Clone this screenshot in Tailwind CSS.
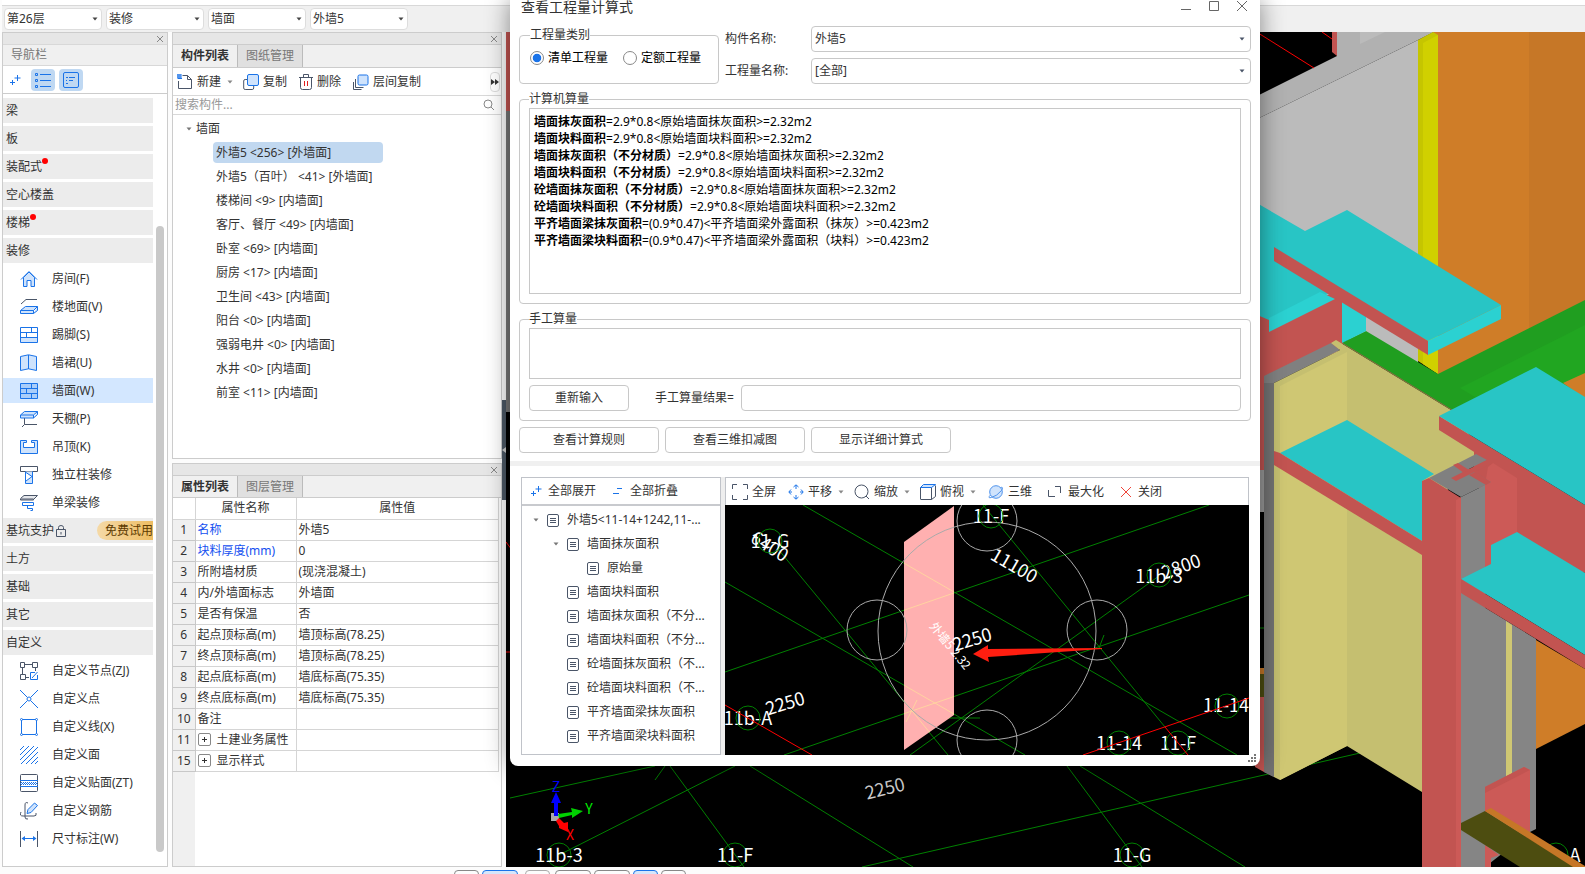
<!DOCTYPE html>
<html lang="zh-CN">
<head>
  <meta charset="UTF-8">
  <meta name="viewport" content="width=device-width, initial-scale=1.0">
  <title>查看工程量计算式</title>
  <script src="https://cdn.jsdelivr.net/npm/@tailwindcss/browser@4"></script>
</head>
<body class="h-screen overflow-hidden bg-[#fcfcfc] text-xs text-[#333] font-['Noto_Sans','Noto_Sans_CJK_SC',sans-serif]">

  <!-- icon sprite -->
  <svg class="hidden" xmlns="http://www.w3.org/2000/svg">
    <symbol id="i-close" viewBox="0 0 8 8"><path d="M1 1l6 6M7 1L1 7" stroke="currentColor" fill="none"/></symbol>
    <symbol id="i-caret" viewBox="0 0 6 4"><path d="M0.500 0.500h5L3 3.500z" fill="currentColor"/></symbol>
    <symbol id="i-plus" viewBox="0 0 12 12"><path d="M8.500 1v6M5.500 4h6M3.500 6v5M1 8.500h5" stroke="#1a73e8" fill="none"/></symbol>
    <symbol id="i-minus" viewBox="0 0 12 12"><path d="M5 3.500h5M1 8.500h6" stroke="#1a73e8" fill="none"/></symbol>
    <symbol id="i-list" viewBox="0 0 16 16"><g stroke="#1a73e8" fill="none"><path d="M5 2.500h11M5 8.500h11M5 14.500h11"/><path d="M.5 1.500h2v2h-2zM.5 7.500h2v2h-2zM.5 13.500h2v2h-2z"/></g></symbol>
    <symbol id="i-card" viewBox="0 0 16 16"><g stroke="#1a73e8" fill="none"><rect x=".5" y=".5" width="15" height="15" rx="1.500"/><path d="M3 5.500h2M6 5.500h6M3 8.500h1M6 8.500h4M3 11.500h2"/></g></symbol>
    <symbol id="i-doc" viewBox="0 0 12 13"><g stroke="#4a5568" fill="none"><rect x=".5" y=".5" width="11" height="12" rx="1.500"/><path d="M3 4.500h6M3 6.500h6M3 8.500h6"/></g></symbol>

    <symbol id="i-new" viewBox="0 0 16 16"><g fill="none"><path d="M5.500 1.500h5l4 4v9h-13V7M10.500 1.500v4h4" stroke="#4a5568"/><path d="M0 1h5M0 3h5M1 4.500h4M1 0v5M3 0v5" stroke="#1a73e8"/></g></symbol>
    <symbol id="i-copy" viewBox="0 0 16 16"><rect x=".7" y="5.500" width="10" height="10" rx="1.500" fill="#fff" stroke="#4a5568"/><rect x="4.500" y=".5" width="11" height="11" rx="1.500" fill="#cfe3fc" stroke="#1a73e8"/></symbol>
    <symbol id="i-trash" viewBox="0 0 14 16"><g fill="none" stroke="#4a5568"><path d="M0 3.500h14M4.500 3V.5h5V3M1.500 4v9.500q0 2 2 2h7q2 0 2-2V4"/><path d="M5.500 7v5M8.500 7v5" stroke="#e02020"/></g></symbol>
    <symbol id="i-floor" viewBox="0 0 16 16"><path d="M2.500 5v8.500h8M.5 8v7.500h8" stroke="#4a5568" fill="none"/><rect x="5" y="1" width="10" height="10" rx="1.500" fill="#cfe3fc" stroke="#1a73e8"/></symbol>
    <symbol id="i-search" viewBox="0 0 12 12"><g fill="none" stroke="currentColor"><circle cx="5" cy="5" r="4"/><path d="M8 8l3 3"/></g></symbol>

    <symbol id="n-room" viewBox="0 0 18 18"><path d="M3.500 7.500v9h3.500v-6h4v6h3.500v-9L9 2z" fill="#cfe3fc" stroke="#1a73e8"/><path d="M1 9.500L9 1.500l8 8" fill="none" stroke="#1a73e8"/></symbol>
    <symbol id="n-ground" viewBox="0 0 18 18"><path d="M1 6l5-4.500h11" fill="none" stroke="#4a5568"/><path d="M.5 12.500h13v3H.5zM.5 12.500l5-4h12l-4 4M17.500 8.500v4l-4 3" fill="#cfe3fc" stroke="#1a73e8"/></symbol>
    <symbol id="n-skirt" viewBox="0 0 18 18"><path d="M.5 11.500h17v5H.5z" fill="#cfe3fc"/><path d="M.5 1.500h17v15H.5zM.5 6.500h17M.5 11.500h17M11.500 1.500v5M6.500 6.500v5" fill="none" stroke="#1a73e8"/></symbol>
    <symbol id="n-dado" viewBox="0 0 18 18"><path d="M.5 2.500L8.500.8l8 1.700v14l-8-1.700-8 1.700z" fill="#cfe3fc" stroke="#1a73e8"/><path d="M8.500 1v14" stroke="#1a73e8"/></symbol>
    <symbol id="n-wall" viewBox="0 0 18 18"><path d="M.5 1.500h17v15H.5z" fill="#a9cdfa"/><path d="M.5 1.500h17v15H.5zM.5 6.500h17M.5 11.500h17M11.500 1.500v5M6.500 6.500v5M11.500 11.500v5" fill="none" stroke="#1a73e8"/></symbol>
    <symbol id="n-ceil" viewBox="0 0 18 18"><path d="M4.500 8v6.500H17M4.500 14.500L2 17" fill="none" stroke="#4a5568"/><path d="M.5 5h13v3H.5zM.5 5l4-3.500h13l-4 3.500M17.500 1.500v3L13.500 8" fill="#cfe3fc" stroke="#1a73e8"/></symbol>
    <symbol id="n-susp" viewBox="0 0 18 18"><path d="M.5 2.500h6v2h-3v5h11v-5h-3v-2h6v13H.5z" fill="#cfe3fc" stroke="#1a73e8"/></symbol>
    <symbol id="n-col" viewBox="0 0 18 18"><path d="M.5.5h17v5H.5z" fill="none" stroke="#4a5568"/><path d="M5.500 5.500v12h7v-12M6 6.500l6 4-6 4.500" fill="#cfe3fc" stroke="#1a73e8"/></symbol>
    <symbol id="n-beam" viewBox="0 0 18 18"><path d="M.5 5h13v1H.5zM.5 4.500L4 1.500h13.500L14 5" fill="#e5e7eb" stroke="#4a5568"/><path d="M2.500 8.500h11v3h-11zM7.500 11.500v3h5v2h-2" fill="none" stroke="#1a73e8"/></symbol>
    <symbol id="n-node" viewBox="0 0 18 18"><g fill="none" stroke="#4a5568"><path d="M.5.500h4v5h-4zM12.500.500h5v5h-5zM.5 12.500h5v5h-5zM5 2.500h7M2.500 6v6M15.500 6v3M6 15.500h3"/><path d="M15 10.500h-4.500v7h7V13M12 16l5.500-6" stroke="#1a73e8"/></g></symbol>
    <symbol id="n-point" viewBox="0 0 18 18"><path d="M0 0l7.500 7.500M18 0l-7.500 7.500M0 18l7.500-7.500M18 18l-7.500-7.500" stroke="#1a73e8"/><circle cx="9" cy="9" r="2" fill="#fff" stroke="#1a73e8"/></symbol>
    <symbol id="n-line" viewBox="0 0 18 18"><g fill="#fff" stroke="#1a73e8"><path d="M1.500 1.500h15v15h-15z"/><circle cx="1.500" cy="1.500" r="1"/><circle cx="16.500" cy="1.500" r="1"/><circle cx="1.500" cy="16.500" r="1"/><circle cx="16.500" cy="16.500" r="1"/></g></symbol>
    <symbol id="n-face" viewBox="0 0 18 18"><path d="M0 4l4-4M0 9l9-9M0 14L14 0M1 18L18 1M6 18L18 6M11 18l7-7M15 18l3-3" stroke="#1a73e8"/></symbol>
    <symbol id="n-paste" viewBox="0 0 18 18"><rect x=".5" y=".5" width="17" height="17" rx="1" fill="none" stroke="#4a5568"/><path d="M0 6.500h18M0 12.500h18" stroke="#1a73e8"/><path d="M1 8.500h17M0 9.500h17M1 10.500h17" stroke="#1a73e8" stroke-dasharray="1 1"/></symbol>
    <symbol id="n-rebar" viewBox="0 0 18 18"><path d="M8 1q-3-1.500-3 2v12q0 2.500 3 2M1 10q-2 4 2 4h11q3 0 2-3" fill="none" stroke="#4a5568"/><path d="M7 11.500l1-4L14.500 1l3 2.500-6.500 7z" fill="#cfe3fc" stroke="#1a73e8"/></symbol>
    <symbol id="n-dim" viewBox="0 0 18 18"><path d="M.5 1v16M17.500 1v16" stroke="#4a5568"/><path d="M3 8.500h12" stroke="#1a73e8"/><path d="M1.500 8.500L5 6v5zM16.500 8.500L13 6v5z" fill="#1a73e8"/></symbol>

    <symbol id="v-full" viewBox="0 0 16 16"><path d="M.5 5V.5H5M11 .5h4.500V5M15.500 11v4.500H11M5 15.500H.5V11" fill="none" stroke="#4a5568"/></symbol>
    <symbol id="v-pan" viewBox="0 0 16 16"><g fill="none" stroke="#1a73e8"><path d="M5.500 3L8 .8 10.500 3M5.500 13L8 15.200 10.500 13M3 5.500L.8 8 3 10.500M13 5.500L15.200 8 13 10.500M8 1v4M8 11v4M1 8h3M12 8h3"/></g></symbol>
    <symbol id="v-zoom" viewBox="0 0 16 16"><g fill="none" stroke="#4a5568"><circle cx="7.500" cy="7.500" r="6.500"/><path d="M12 12l3 3"/></g></symbol>
    <symbol id="v-top" viewBox="0 0 16 16"><path d="M.5 3.500h11v12H1q-.5 0-.5-.5zM11.500 15.500l4-3v-11" fill="none" stroke="#4a5568"/><path d="M.5 3.500l3-3h12l-4 3z" fill="#cfe3fc" stroke="#1a73e8"/></symbol>
    <symbol id="v-orbit" viewBox="0 0 16 16"><circle cx="8" cy="8" r="6.300" fill="#cfe3fc" stroke="#4f93ec"/><path d="M2.500 11q-3.500 3.500 1 2.500Q9 12 13.500 6.500q2.500-4-1-3" fill="none" stroke="#4f93ec"/></symbol>
    <symbol id="v-max" viewBox="0 0 16 16"><path d="M7 2.500h5.500V9M.5 6v6.500H7" fill="none" stroke="#4a5568"/></symbol>
    <symbol id="v-x" viewBox="0 0 16 16"><path d="M3 3l10 10M13 3L3 13" fill="none" stroke="#f04438"/></symbol>
  </svg>

  <div class="flex h-full flex-col pl-0.5">
    <div class="h-[5px] shrink-0 bg-white"></div>

    <!-- floor / category pickers -->
    <header class="flex h-[27px] shrink-0 items-center gap-1 border-t border-[#d8d8d8] bg-[#f0f0f0] pr-2 pl-0.5" id="pickers"></header>

    <main class="flex min-h-0 flex-1">
      <!-- navigation -->
      <nav class="flex w-[166px] shrink-0 flex-col border border-[#ccc] bg-white">
        <div class="flex h-[11px] items-center justify-end bg-[#e6e6e6] pr-[3px] text-[#888]"><button aria-label="关闭"><svg class="size-2"><use href="#i-close"/></svg></button></div>
        <div class="flex h-[22px] items-center border-y border-[#d8d8d8] bg-[#f0f0f0] pl-2 text-[#777]">导航栏</div>
        <div class="flex h-7 shrink-0 items-center gap-1 border-b border-[#ccc]">
          <button class="flex h-[22px] w-6 items-center justify-center" aria-label="展开"><svg class="size-3"><use href="#i-plus"/></svg></button>
          <button class="flex h-[22px] w-6 items-center justify-center rounded-sm bg-[#bfd8f2]" aria-label="列表"><svg class="size-4"><use href="#i-list"/></svg></button>
          <button class="flex h-[22px] w-6 items-center justify-center rounded-sm bg-[#bfd8f2]" aria-label="卡片"><svg class="size-4"><use href="#i-card"/></svg></button>
        </div>
        <div class="flex min-h-0 flex-1 overflow-hidden pt-1">
          <div class="flex w-[150px] flex-col gap-[3px]" id="nav"></div>
          <div class="flex flex-1 justify-center pt-32 pb-[14px]"><div class="h-full w-2 rounded-full bg-[#c9c9c9]"></div></div>
        </div>
      </nav>

      <div class="ml-1 flex w-[330px] shrink-0 flex-col gap-1">
        <!-- component list -->
        <section class="flex h-[427px] shrink-0 flex-col border border-[#ccc] bg-white">
          <div class="flex h-[11px] shrink-0 items-center justify-end bg-[#e6e6e6] pr-[3px] text-[#888]"><button aria-label="关闭"><svg class="size-2"><use href="#i-close"/></svg></button></div>
          <div class="flex h-6 shrink-0 border-y border-[#ccc] bg-[#f0f0f0]">
            <button class="w-16 font-bold">构件列表</button>
            <button class="w-[66px] border-x border-[#bbb] bg-[#e0e0e0] text-[#777]">图纸管理</button>
          </div>
          <div class="flex h-7 shrink-0 items-center border-b border-[#d8d8d8] pl-1">
            <button class="flex items-center gap-1"><svg class="size-4"><use href="#i-new"/></svg>新建</button>
            <svg class="ml-1.5 h-1 w-1.5 text-[#888]"><use href="#i-caret"/></svg>
            <button class="ml-2.5 flex items-center gap-1"><svg class="size-4"><use href="#i-copy"/></svg>复制</button>
            <button class="ml-3 flex items-center gap-1"><svg class="h-4 w-3.5"><use href="#i-trash"/></svg>删除</button>
            <button class="ml-3 flex items-center gap-1"><svg class="size-4"><use href="#i-floor"/></svg>层间复制</button>
            <button class="mr-px ml-auto flex h-5 w-2.5 items-center justify-center rounded-sm border border-[#ddd]" aria-label="更多"><svg class="h-1.5 w-2 shrink-0" viewBox="0 0 8 6"><path d="M0 0l4 3-4 3zM4 0l4 3-4 3z" fill="#333"/></svg></button>
          </div>
          <label class="flex h-[19px] shrink-0 items-center border-b border-[#d8d8d8] pr-1.5 pl-0.5 text-[#888]">
            <input class="min-w-0 flex-1 outline-none placeholder:text-[#999]" placeholder="搜索构件..." aria-label="搜索构件">
            <svg class="size-3"><use href="#i-search"/></svg>
          </label>
          <div class="pt-0.5 pl-[13px]">
            <div class="flex h-[23px] items-center gap-1"><svg class="h-1 w-1.5 text-[#777]"><use href="#i-caret"/></svg>墙面</div>
            <ul id="components"></ul>
          </div>
        </section>

        <!-- properties -->
        <section class="flex min-h-0 flex-1 flex-col border border-[#ccc] bg-white">
          <div class="flex h-[11px] shrink-0 items-center justify-end bg-[#e6e6e6] pr-[3px] text-[#888]"><button aria-label="关闭"><svg class="size-2"><use href="#i-close"/></svg></button></div>
          <div class="flex h-[23px] shrink-0 border-y border-[#ccc] bg-[#f0f0f0]">
            <button class="w-16 font-bold">属性列表</button>
            <button class="w-[66px] border-x border-[#bbb] bg-[#e0e0e0] text-[#777]">图层管理</button>
          </div>
          <table class="mr-0.5 table-fixed border-collapse">
            <thead>
              <tr class="h-[21px]">
                <th class="w-[22px] border-r border-b border-[#d5d5d5]"></th>
                <th class="w-[101px] border-r border-b border-[#d5d5d5] font-normal">属性名称</th>
                <th class="border-r border-b border-[#d5d5d5] font-normal">属性值</th>
              </tr>
            </thead>
            <tbody id="props"></tbody>
          </table>
          <div class="w-[22px] flex-1 bg-[#f0f0f0]"></div>
        </section>
      </div>

      <div class="flex w-1 shrink-0 flex-col pt-[368px]"><div class="flex h-[100px] items-center bg-[#4c5865]"><svg class="h-1.5 w-1" viewBox="0 0 4 6"><path d="M4 0v6L0 3z" fill="#ccc"/></svg></div></div>

      <!-- 3D model -->
      <div class="relative min-w-0 flex-1 overflow-hidden bg-black">
        <svg class="absolute inset-0 h-full w-full font-['Noto_Sans_CJK_SC',sans-serif]" viewBox="506 32 1079 835" preserveAspectRatio="xMinYMin slice">
          <path d="M506 32h6v79h-6z" fill="#c25451"/>
          <path d="M506 111h6v301h-6z" fill="#777"/>
          <g stroke="#008000" fill="none">
            <path d="M510 798L655 766M670 766L744 867M665 766L655 780M735 766L559 855M750 766L913 867M862 867L1360 753M1067 766L1142 867M1080 766L1245 867"/>
            <circle cx="559" cy="855" r="12"/><circle cx="735" cy="855" r="12"/><circle cx="1132" cy="855" r="12"/><circle cx="1556" cy="855" r="12"/>
          </g>
          <path d="M506 542l6 8M506 652h6" stroke="#f00"/>
          <g fill="#fff" font-size="18" text-anchor="middle">
            <text x="559" y="862">11b-3</text><text x="735" y="862">11-F</text><text x="1132" y="862">11-G</text>
            <text transform="rotate(-14 885 789)" x="885" y="795" fill="#ccc">2250</text>
            <text x="1575" y="862">A</text>
          </g>
          <!-- axis gizmo -->
          <path d="M551 813h8v8h-8z" fill="#aaa"/>
          <path d="M554 816v-13h-3l5-11 5 11h-3v13z" fill="#00f"/>
          <path d="M558 814l14-2-1-4 12 3-11 7v-3l-13 3z" fill="#00d000"/>
          <path d="M556 821l3-3 5 5 4-1 0 10-9-4 0-2z" fill="#f00"/>
          <g font-size="14" text-anchor="middle"><text x="556" y="792" fill="#00f">Z</text><text x="589" y="814" fill="#0e0">Y</text><text x="570" y="840" fill="#f00">X</text></g>

          <!-- walls behind -->
          <path d="M1255 97l82-41V32h97l-16 8-163 80z" fill="#b1b1b1"/>
          <path d="M1360 32h25l-25 12z" fill="#bbb"/>
          <path d="M1255 120l163-80v325l-163-60z" fill="#bbb"/>
          <path d="M1332 32h5v24l-5-4z" fill="#c25451"/>
          <path d="M1255 31l59 37M1322 32l10 7" stroke="#f00"/>
          <path d="M1433 32h96v320l-91 24z" fill="#cf7d28"/>
          <path d="M1529 32h56v290l-56 30z" fill="#c67727"/>
          <path d="M1418 40l15-8 5 3v339l-20-13z" fill="#c5c500"/>
          <path d="M1423 43l15-8v339l-15-10z" fill="#d0d000"/>
          <path d="M1341 343l25-12 72 43 147-74v110l-134 0z" fill="#209e20"/>
          <path d="M1460 388l125-63v60l-110 12z" fill="#21a621"/>
          <path d="M1563 383l22-10v26z" fill="#cf7d28"/>

          <!-- far slabs -->
          <path d="M1255 310l14 8 66-26h8v52l-6 8-82 34z" fill="#c25451"/>
          <path d="M1255 202l50 29 42-21 154 95-73 36-93-50-66 29-14-6z" fill="#28c5c5"/>
          <path d="M1269 318l51-26 15 7-66 33z" fill="#2bd1d1"/>
          <path d="M1342 300l24 15v16l-24 12z" fill="#2bd1d1"/>
          <path d="M1428 341l73-36v14l-73 36z" fill="#2bd1d1"/>
          <path d="M1274 247l154 94v14l-154-94z" fill="#c25451"/>

          <!-- bay on the left -->
          <path d="M1255 376h9v396l-9-5z" fill="#c25451"/>
          <path d="M1255 470h9v42h-9z" fill="#999"/>
          <path d="M1255 512h9v156h-9z" fill="#000"/>
          <path d="M1255 628h9" stroke="#008000"/>
          <path d="M1255 668h9v6h-9z" fill="#c67727"/>
          <path d="M1255 674h9v23h-9z" fill="#4d4d10"/>
          <path d="M1264 376l67-33 9 7-66 33v394l-10-5z" fill="#808080"/>
          <path d="M1264 383h10v394l-10-5z" fill="#727272"/>
          <path d="M1274 383l66-33-9-7 5-3 115 70 30 40-59 70v272l-75-46-67 34-6-3z" fill="#c5bf70"/>
          <path d="M1280 386l67-34v394l-67 34z" fill="#cfc773"/>
          <path d="M1342 343l110 67" stroke="#8a6a40" fill="none"/>
          <path d="M1280 453l67-33 87 54-12 7v60z" fill="#28c5c5"/>
          <path d="M1274 451l6 2 142 88v14l-148-90z" fill="#c25451"/>

          <!-- right hand slabs and columns -->
          <path d="M1439 416l146 89v68l-68-20-30-93-48-30z" fill="#c25451"/>
          <path d="M1439 416l97-49 49 30v108z" fill="#28c5c5"/>
          <path d="M1474 452h24v36h-24z" fill="#c25451"/>
          <path d="M1485 485l3-18 5-4 24 15v54l-26 20v15h-6z" fill="#cc5a57"/>
          <path d="M1461 593l75 46v190l-6 3-45 35h-24z" fill="#858585"/>
          <path d="M1506 621l6 4v151h-6z" fill="#cfc773"/>
          <path d="M1461 497l24-12v382h-24z" fill="#858585"/>
          <path d="M1429 478l47-24 11 6-18 9 22 13-30 15z" fill="#808080"/>
          <path d="M1451 478l38-19 4 4-37 18z" fill="#c25451"/>
          <path d="M1453 465l5-2 11 7-5 3zM1469 475l6-3 16 10-5 3z" fill="#c25451"/>
          <path d="M1422 481l7-3 32 20v369h-39z" fill="#c25451"/>
          <path d="M1456 500l5-3v370h-5z" fill="#cc5a57"/>
          <path d="M1461 579l30-15v-19l26-13 68 41v82z" fill="#28c5c5"/>
          <path d="M1461 579l124 76v14l-124-76z" fill="#c25451"/>
          <path d="M1536 640l49 29v55l-49 25z" fill="#cf7d28"/>
          <path d="M1485 787l39-20 6 3v62l-45-20z" fill="#cc5a57"/>
          <path d="M1485 787l39-20 6 3-45 23z" fill="#c25451"/>
          <path d="M1485 845l14 10-8 3v9h-6z" fill="#cc5a57"/>
          <path d="M1461 823l24-12 90 56h-55l-59-37z" fill="#4d4d10"/>
          <path d="M1485 811l6-3 94 58v1h-12z" fill="#c67727"/>
        </svg>
      </div>
    </main>

    <!-- status bar -->
    <footer class="flex h-[7px] shrink-0 items-start gap-[3px] overflow-hidden pt-[3px] pl-[452px]">
      <button class="h-4 w-[25px] rounded-sm border border-[#888]" aria-label="点"></button>
      <button class="h-4 w-9 rounded-sm border border-[#1a73e8] bg-[#d5e6fb]" aria-label="线"></button>
      <button class="ml-1 h-4 w-[25px] rounded-sm border border-[#aaa]" aria-label="面"></button>
      <button class="ml-0.5 h-4 w-9 rounded-sm border border-[#888]" aria-label="正交"></button>
      <button class="h-4 w-9 rounded-sm border border-[#888]" aria-label="捕捉"></button>
      <button class="h-4 w-[25px] rounded-sm border border-[#1a73e8] bg-[#d5e6fb]" aria-label="极轴"></button>
      <button class="h-4 w-[25px] rounded-sm border border-[#888]" aria-label="动态输入"></button>
    </footer>
  </div>

  <!-- calculation dialog -->
  <div role="dialog" aria-label="查看工程量计算式" class="absolute top-0 left-[510px] w-[750px] rounded-b-lg bg-white pb-[11px] shadow-[0_0_24px_rgba(0,0,0,0.45)]">
    <div class="flex h-[26px] items-start justify-between pr-[13px] pl-[11px]">
      <h1 class="text-sm leading-[14px]">查看工程量计算式</h1>
      <div class="flex gap-[18px] pt-px text-[#666]">
        <button aria-label="最小化"><svg class="size-2.5" viewBox="0 0 10 10"><path d="M0 8.500h10" stroke="currentColor"/></svg></button>
        <button aria-label="最大化"><svg class="size-2.5" viewBox="0 0 10 10"><path d="M.5 .5h9v9h-9z" fill="none" stroke="currentColor"/></svg></button>
        <button aria-label="关闭"><svg class="size-2.5" viewBox="0 0 10 10"><path d="M0 0l10 10M10 0L0 10" stroke="currentColor"/></svg></button>
      </div>
    </div>

    <div class="flex flex-col gap-1.5 px-[9px]">
      <div class="flex h-[58px]">
        <fieldset class="w-[200px] rounded-sm border border-[#c8c8c8] px-2.5 pt-1.5 text-black">
          <legend class="leading-[18px] text-[#333]">工程量类别</legend>
          <div class="flex gap-[15px]">
            <label class="flex items-center gap-1"><input type="radio" name="kind" checked class="size-3.5 appearance-none rounded-full border border-[#888] bg-white checked:bg-radial checked:from-[#1a73e8] checked:from-45% checked:to-white checked:to-55%">清单工程量</label>
            <label class="flex items-center gap-1"><input type="radio" name="kind" class="size-3.5 appearance-none rounded-full border border-[#888] bg-white checked:bg-radial checked:from-[#1a73e8] checked:from-45% checked:to-white checked:to-55%">定额工程量</label>
          </div>
        </fieldset>
        <div class="grid flex-1 grid-cols-[86px_1fr] items-center gap-y-1.5 pl-1.5">
          <label for="compName">构件名称:</label>
          <div class="relative">
            <select id="compName" class="block h-[26px] w-full appearance-none rounded-sm border border-[#c8c8c8] bg-white pl-[3px]"><option>外墙5</option></select>
            <svg class="pointer-events-none absolute top-[11px] right-1.5 h-1 w-1.5 text-[#4a5568]"><use href="#i-caret"/></svg>
          </div>
          <label for="qtyName">工程量名称:</label>
          <div class="relative">
            <select id="qtyName" class="block h-[26px] w-full appearance-none rounded-sm border border-[#c8c8c8] bg-white pl-[3px]"><option>[全部]</option></select>
            <svg class="pointer-events-none absolute top-[11px] right-1.5 h-1 w-1.5 text-[#4a5568]"><use href="#i-caret"/></svg>
          </div>
        </div>
      </div>

      <fieldset class="rounded-sm border border-[#c8c8c8] px-[9px] pb-[9px]">
        <legend class="leading-[18px]">计算机算量</legend>
        <div id="formulas" class="h-[186px] border border-[#c8c8c8] px-1 pt-1 leading-[17px] text-black"></div>
      </fieldset>

      <fieldset class="rounded-sm border border-[#c8c8c8] px-[9px] pb-[9px]">
        <legend class="leading-[18px]">手工算量</legend>
        <textarea aria-label="手工算量" class="block h-[51px] w-full resize-none border border-[#c8c8c8]"></textarea>
        <div class="mt-1.5 flex h-[26px] items-center">
          <button class="h-full w-[100px] rounded-sm border border-[#c8c8c8]">重新输入</button>
          <label for="manual" class="ml-[26px] w-[86px]">手工算量结果=</label>
          <input id="manual" class="h-full min-w-0 flex-1 rounded-sm border border-[#c8c8c8] px-1">
        </div>
      </fieldset>

      <div class="flex h-[26px] gap-1.5">
        <button class="w-[140px] rounded-sm border border-[#c8c8c8]">查看计算规则</button>
        <button class="w-[140px] rounded-sm border border-[#c8c8c8]">查看三维扣减图</button>
        <button class="w-[140px] rounded-sm border border-[#c8c8c8]">显示详细计算式</button>
      </div>
    </div>

    <div class="mt-2 h-[5px] bg-[#f0f0f0]"></div>

    <div class="mx-[11px] mt-[11px] flex h-[278px] bg-[#eee]">
      <div class="flex w-[200px] flex-col border border-[#c0c3c9] bg-white">
        <div class="flex h-7 items-center border-b-2 border-[#c8cace] pl-2">
          <button class="flex items-center gap-1.5"><svg class="size-3"><use href="#i-plus"/></svg>全部展开</button>
          <button class="ml-4 flex items-center gap-1.5"><svg class="size-3"><use href="#i-minus"/></svg>全部折叠</button>
        </div>
        <ul id="tree" class="pt-0.5"></ul>
      </div>
      <div class="ml-1 flex min-w-0 flex-1 flex-col">
        <div class="flex h-7 shrink-0 items-center border border-b-0 border-[#c0c3c9] bg-white pl-1.5">
          <button class="flex items-center gap-1"><svg class="size-4"><use href="#v-full"/></svg>全屏</button>
          <button class="ml-3 flex items-center gap-1"><svg class="size-4"><use href="#v-pan"/></svg>平移</button>
          <svg class="ml-1.5 h-1 w-1.5 text-[#888]"><use href="#i-caret"/></svg>
          <button class="ml-2.5 flex items-center gap-1"><svg class="size-4"><use href="#v-zoom"/></svg>缩放</button>
          <svg class="ml-1.5 h-1 w-1.5 text-[#888]"><use href="#i-caret"/></svg>
          <button class="ml-2.5 flex items-center gap-1"><svg class="size-4"><use href="#v-top"/></svg>俯视</button>
          <svg class="ml-1.5 h-1 w-1.5 text-[#888]"><use href="#i-caret"/></svg>
          <button class="ml-3 flex items-center gap-1"><svg class="size-4"><use href="#v-orbit"/></svg>三维</button>
          <button class="ml-4 flex items-center gap-1"><svg class="size-4"><use href="#v-max"/></svg>最大化</button>
          <button class="ml-3.5 flex items-center gap-1"><svg class="size-4"><use href="#v-x"/></svg>关闭</button>
        </div>
        <svg class="min-h-0 w-full flex-1 bg-black font-['Noto_Sans_CJK_SC',sans-serif]" viewBox="725 505 524 250" preserveAspectRatio="xMidYMid slice">
          <clipPath id="face"><path d="M904 542l50-36v209l-50 35z"/></clipPath>
          <path d="M803 505l434 250M725 582l300 173M778 549L948 755M725 672L1209 505M784 755L1249 595M983 505L1165 727M1159 576L910 755M1099 648l5-13M906 722l11-22M943 718h37" fill="none" stroke="#008000"/>
          <path d="M904 542l50-36v209l-50 35z" fill="#ffb0b0"/>
          <g clip-path="url(#face)"><path d="M803 505l434 250M725 582l300 173M895 690L948 755M725 672L1209 505M784 755L1249 595M906 722l11-22" fill="none" stroke="#ffd3a0"/></g>
          <g fill="none" stroke="#aaa"><circle cx="987" cy="631" r="109"/><circle cx="987" cy="521" r="30"/><circle cx="877" cy="630" r="30"/><circle cx="1097" cy="630" r="30"/><circle cx="987" cy="740" r="30"/></g>
          <g fill="#fff" font-size="18" text-anchor="middle">
            <text x="770" y="548">11-G</text><text transform="rotate(32 770 546)" x="770" y="553">6400</text>
            <text x="748" y="725">11b-A</text><text transform="rotate(-17 785 703)" x="785" y="710">2250</text>
            <text x="991" y="523">11-F</text><text transform="rotate(30 1014 566)" x="1014" y="572">11100</text>
            <text x="1159" y="583">11b-3</text><text transform="rotate(-20 1181 566)" x="1181" y="573">2800</text>
            <text transform="rotate(-17 972 639)" x="972" y="646">2250</text>
            <text x="1119" y="750">11-14</text><text x="1178" y="750">11-F</text><text x="1226" y="712">11-14</text>
            <text transform="rotate(51 950 646)" x="950" y="650" font-size="12">外墙5 2.32</text>
          </g>
          <g fill="none" stroke="#008000"><circle cx="770" cy="541" r="12"/><circle cx="748" cy="718" r="12"/><circle cx="991" cy="516" r="12"/><circle cx="1159" cy="575" r="12"/><circle cx="1119" cy="743" r="12"/><circle cx="1178" cy="743" r="12"/><circle cx="1227" cy="706" r="12"/></g>
          <path d="M725 705l87 50M1083 755l166-57M1165 727l23 28" stroke="#f00"/>
          <path d="M973 654l15-9v4l114-1v1l-114 8 1 5z" fill="#ff1e10"/>
        </svg>
      </div>
    </div>
    <svg class="absolute right-1 bottom-1 size-2" viewBox="0 0 8 8"><path d="M6 0h2v2H6zM6 3h2v2H6zM3 3h2v2H3zM6 6h2v2H6zM3 6h2v2H3zM0 6h2v2H0z" fill="#777"/></svg>
  </div>

  <script>
    const byId = id => document.getElementById(id);

    const pickers = [['楼层', '第26层'], ['类别', '装修'], ['图元', '墙面'], ['构件', '外墙5']];
    byId('pickers').innerHTML = pickers.map(([label, value]) => `
      <div class="relative w-[98px]">
        <select aria-label="${label}" class="block h-[22px] w-full appearance-none rounded-sm border border-[#ddd] bg-white pl-0.5"><option>${value}</option></select>
        <svg class="pointer-events-none absolute top-[9px] right-1 h-1 w-1.5 text-[#444]"><use href="#i-caret"/></svg>
      </div>`).join('');

    // [title, flag] opens a group, [title, icon, 'item'] is an entry in it
    const nav = [
      ['梁'], ['板'], ['装配式', 'dot'], ['空心楼盖'], ['楼梯', 'dot'], ['装修'],
      ['房间(F)', 'n-room', 'item'], ['楼地面(V)', 'n-ground', 'item'], ['踢脚(S)', 'n-skirt', 'item'],
      ['墙裙(U)', 'n-dado', 'item'], ['墙面(W)', 'n-wall', 'item'], ['天棚(P)', 'n-ceil', 'item'],
      ['吊顶(K)', 'n-susp', 'item'], ['独立柱装修', 'n-col', 'item'], ['单梁装修', 'n-beam', 'item'],
      ['基坑支护', 'trial'], ['土方'], ['基础'], ['其它'], ['自定义'],
      ['自定义节点(ZJ)', 'n-node', 'item'], ['自定义点', 'n-point', 'item'], ['自定义线(X)', 'n-line', 'item'],
      ['自定义面', 'n-face', 'item'], ['自定义贴面(ZT)', 'n-paste', 'item'], ['自定义钢筋', 'n-rebar', 'item'],
      ['尺寸标注(W)', 'n-dim', 'item']
    ];
    const dot = '<span class="mb-3 size-1.5 rounded-full bg-[#f00]"></span>';
    const trial = `
      <svg class="ml-0.5 h-3 w-2.5" viewBox="0 0 10 12"><path d="M.5 4.500h9v7h-9zM2.500 4.500v-2q0-2 2.500-2t2.500 2v2M5 7v2.500" fill="none" stroke="#4a5568"/></svg>
      <span class="ml-auto rounded-l-full bg-linear-to-r from-[#f5d9a6] to-[#edbd62] pl-2 leading-[19px] text-[#5c3a00]">免费试用</span>`;
    byId('nav').innerHTML = nav.map(([title, extra, item]) => item
      ? `<a href="#" class="flex h-[25px] shrink-0 items-center gap-3.5 pl-[17px] ${title === '墙面(W)' ? 'bg-[#d3e7ff]' : ''}"><svg class="size-[18px] shrink-0"><use href="#${extra}"/></svg>${title}</a>`
      : `<button class="flex h-[25px] shrink-0 items-center bg-[#ececec] pl-[3px]">${title}${extra === 'dot' ? dot : ''}${extra === 'trial' ? trial : ''}</button>`
    ).join('');

    const components = [
      '外墙5 <256> [外墙面]', '外墙5（百叶） <41> [外墙面]', '楼梯间 <9> [内墙面]', '客厅、餐厅 <49> [内墙面]',
      '卧室 <69> [内墙面]', '厨房 <17> [内墙面]', '卫生间 <43> [内墙面]', '阳台 <0> [内墙面]',
      '强弱电井 <0> [内墙面]', '水井 <0> [内墙面]', '前室 <11> [内墙面]'
    ];
    const esc = s => s.replace(/</g, '&lt;').replace(/>/g, '&gt;');
    byId('components').innerHTML = components.map((name, i) =>
      `<li class="ml-[27px] flex h-6 items-center"><span class="w-[170px] rounded-sm pl-[3px] leading-[21px] whitespace-nowrap ${i === 0 ? 'bg-[#c1d8f0]' : ''}">${esc(name)}</span></li>`
    ).join('');

    const props = [
      [1, '名称', '外墙5'], [2, '块料厚度(mm)', '0'], [3, '所附墙材质', '(现浇混凝土)'], [4, '内/外墙面标志', '外墙面'],
      [5, '是否有保温', '否'], [6, '起点顶标高(m)', '墙顶标高(78.25)'], [7, '终点顶标高(m)', '墙顶标高(78.25)'],
      [8, '起点底标高(m)', '墙底标高(75.35)'], [9, '终点底标高(m)', '墙底标高(75.35)'], [10, '备注', ''],
      [11, '土建业务属性', ''], [15, '显示样式', '']
    ];
    const plusBox = '<button class="mr-1.5 inline-flex size-[13px] items-center justify-center rounded-xs border border-[#888] align-[-2px]" aria-label="展开"><svg class="size-[5px]" viewBox="0 0 5 5"><path d="M0 2.500h5M2.500 0v5" stroke="#333"/></svg></button>';
    byId('props').innerHTML = props.map(([n, name, value]) => `
      <tr class="h-[21px] leading-[20px] whitespace-nowrap">
        <td class="border-r border-b border-[#c8c8c8] bg-[#f0f0f0] text-center">${n}</td>
        <td class="border-r border-b border-[#d5d5d5] pl-0.5 ${n < 3 ? 'text-[#1450f0]' : ''}"><span class="flex h-5 items-center">${n > 10 ? plusBox : ''}${name}</span></td>
        <td class="border-r border-b border-[#d5d5d5] pl-0.5">${value}</td>
      </tr>`).join('');

    const formulas = [
      ['墙面抹灰面积', '=2.9*0.8<原始墙面抹灰面积>=2.32m2'],
      ['墙面块料面积', '=2.9*0.8<原始墙面块料面积>=2.32m2'],
      ['墙面抹灰面积（不分材质）', '=2.9*0.8<原始墙面抹灰面积>=2.32m2'],
      ['墙面块料面积（不分材质）', '=2.9*0.8<原始墙面块料面积>=2.32m2'],
      ['砼墙面抹灰面积（不分材质）', '=2.9*0.8<原始墙面抹灰面积>=2.32m2'],
      ['砼墙面块料面积（不分材质）', '=2.9*0.8<原始墙面块料面积>=2.32m2'],
      ['平齐墙面梁抹灰面积', '=(0.9*0.47)<平齐墙面梁外露面积（抹灰）>=0.423m2'],
      ['平齐墙面梁块料面积', '=(0.9*0.47)<平齐墙面梁外露面积（块料）>=0.423m2']
    ];
    byId('formulas').innerHTML = formulas.map(([name, expr]) => `<p><b>${name}</b>${esc(expr)}</p>`).join('');

    const pads = ['pl-[11px]', 'pl-[31px]', 'pl-[51px]'];
    const tree = [
      [0, '外墙5<11-14+1242,11-...', true], [1, '墙面抹灰面积', true], [2, '原始量'], [1, '墙面块料面积'],
      [1, '墙面抹灰面积（不分...'], [1, '墙面块料面积（不分...'], [1, '砼墙面抹灰面积（不...'],
      [1, '砼墙面块料面积（不...'], [1, '平齐墙面梁抹灰面积'], [1, '平齐墙面梁块料面积']
    ];
    byId('tree').innerHTML = tree.map(([level, name, open]) => `
      <li class="flex h-6 items-center gap-2 whitespace-nowrap ${pads[level]}">
        <svg class="h-1 w-1.5 shrink-0 text-[#777] ${open ? '' : 'invisible'}"><use href="#i-caret"/></svg>
        <svg class="h-[13px] w-3 shrink-0"><use href="#i-doc"/></svg>${esc(name)}
      </li>`).join('');
  </script>
</body>
</html>
